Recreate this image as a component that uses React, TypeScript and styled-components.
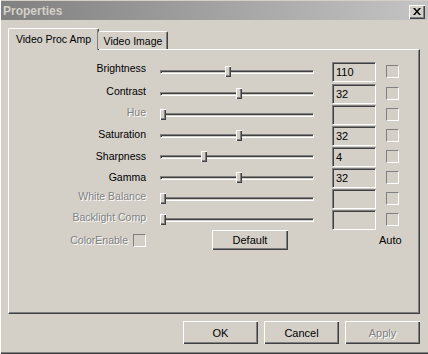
import React from 'react';
import styled, { createGlobalStyle, css } from 'styled-components';

const FACE = '#d4d0c8';
const SHADOW = '#808080';
const DARK = '#404040';
const HILITE = '#ffffff';
const FONT = '"Liberation Sans", Arial, sans-serif';

const Global = createGlobalStyle`
  html, body { margin: 0; padding: 0; background: ${FACE}; }
  body { font-family: ${FONT}; font-size: 10.5px; color: #000; }
  * { box-sizing: border-box; }
`;

const disabledText = css`
  color: ${SHADOW};
  text-shadow: 1px 1px 0 ${HILITE};
`;

const raised = css`
  box-shadow: inset 1px 1px 0 ${HILITE}, inset -1px -1px 0 ${DARK}, inset -2px -2px 0 ${SHADOW};
`;

const Window = styled.div`
  width: 428px;
  height: 354px;
  background: ${FACE};
  display: flex;
  flex-direction: column;
  box-shadow: inset 1px 0 0 ${HILITE}, inset 0 -1px 0 ${DARK}, inset 0 -2px 0 ${SHADOW};
`;

const TitleBar = styled.div`
  height: 19px;
  margin: 1px 0 0 1px;
  padding: 0 3px 0 2px;
  display: flex;
  align-items: center;
  justify-content: space-between;
  background: linear-gradient(to right, #808080, #c4c4c4);
`;

const Title = styled.span`
  font-weight: bold;
  font-size: 12px;
  color: ${FACE};
  margin-top: 1px;
`;

const CloseButton = styled.div`
  width: 16px;
  height: 14px;
  margin-top: 3px;
  background: ${FACE};
  ${raised};
  display: flex;
  align-items: center;
  justify-content: center;
  padding-bottom: 1px;
  padding-right: 1px;
`;

const Body = styled.div`
  flex: 1;
  padding: 8px 8px 0 8px;
  display: flex;
  flex-direction: column;
`;

const TabStrip = styled.div`
  display: flex;
  align-items: flex-end;
  height: 22px;
  margin-bottom: -1px;
  position: relative;
  z-index: 1;
`;

const Tab = styled.div<{ $active?: boolean }>`
  background: ${FACE};
  border-top: 1px solid ${HILITE};
  border-left: 1px solid ${HILITE};
  border-right: 1px solid ${DARK};
  border-top-left-radius: 2px;
  border-top-right-radius: 2px;
  box-shadow: inset -1px 0 0 ${SHADOW};
  display: flex;
  justify-content: center;
  ${(p) =>
    p.$active
      ? css`
          width: 91px;
          height: 22px;
          padding-top: 4px;
        `
      : css`
          width: 70px;
          height: 18px;
          margin-bottom: 1px;
          margin-left: -1px;
          border-left-color: transparent;
          padding-top: 3px;
        `}
`;

const Panel = styled.div`
  width: 412px;
  height: 265px;
  border-top: 1px solid ${HILITE};
  border-left: 1px solid ${HILITE};
  border-right: 1px solid ${DARK};
  border-bottom: 1px solid ${DARK};
  box-shadow: inset -1px -1px 0 ${SHADOW};
  padding-top: 12px;
  display: flex;
  flex-direction: column;
`;

const Row = styled.div`
  height: 21px;
  display: flex;
  align-items: flex-start;
  flex-shrink: 0;
  &:first-child {
    height: 22px;
  }
`;

const Label = styled.div<{ $disabled?: boolean; $dy: number }>`
  width: 137px;
  text-align: right;
  line-height: 13px;
  margin-top: ${(p) => p.$dy}px;
  white-space: nowrap;
  ${(p) => p.$disabled && disabledText};
`;

const SliderBox = styled.div`
  margin-left: 14px;
  width: 154px;
  height: 20px;
  padding-top: 8px;
  position: relative;
`;

const Track = styled.div`
  height: 4px;
  border-top: 1px solid ${SHADOW};
  border-left: 1px solid ${SHADOW};
  border-bottom: 1px solid ${HILITE};
  border-right: 1px solid ${HILITE};
  box-shadow: inset 1px 1px 0 ${DARK};
`;

const Thumb = styled.div`
  position: absolute;
  top: 4px;
  width: 6px;
  height: 11px;
  background: ${FACE};
  ${raised};
`;

const EditBox = styled.div`
  margin-left: 18px;
  width: 44px;
  height: 20px;
  background: ${FACE};
  border-top: 1px solid ${SHADOW};
  border-left: 1px solid ${SHADOW};
  border-bottom: 1px solid ${HILITE};
  border-right: 1px solid ${HILITE};
  box-shadow: inset 1px 1px 0 ${DARK};
  padding: 3px 0 0 3px;
  line-height: 13px;
  font-size: 11px;
`;

const CheckBox = styled.div<{ $ml?: number }>`
  margin-left: ${(p) => p.$ml ?? 10}px;
  margin-top: 3px;
  width: 13px;
  height: 13px;
  flex-shrink: 0;
  background: ${FACE};
  border-top: 1px solid ${SHADOW};
  border-left: 1px solid ${SHADOW};
  border-bottom: 1px solid ${HILITE};
  border-right: 1px solid ${HILITE};
`;

const EnableCell = styled.div`
  width: 137px;
  display: flex;
  justify-content: flex-end;
  align-items: flex-start;
`;

const EnableLabel = styled.span`
  line-height: 13px;
  margin-top: 3px;
  ${disabledText};
`;

const ButtonCell = styled.div`
  margin-left: 14px;
  width: 154px;
  padding-left: 52px;
  margin-top: -1px;
`;

const PushButton = styled.div<{ $w: number; $h: number; $disabled?: boolean }>`
  width: ${(p) => p.$w}px;
  height: ${(p) => p.$h}px;
  background: ${FACE};
  ${raised};
  display: flex;
  align-items: center;
  justify-content: center;
  font-size: 11px;
  ${(p) => p.$disabled && disabledText};
`;

const AutoText = styled.div`
  margin-left: 65px;
  margin-top: 3px;
  line-height: 13px;
  font-size: 11px;
`;

const ButtonRow = styled.div`
  margin-top: 7px;
  display: flex;
  justify-content: flex-end;
  gap: 6px;
`;

type Ctrl = { name: string; value: string; pos: number; dy: number; disabled?: boolean };

const controls: Ctrl[] = [
  { name: 'Brightness', value: '110', pos: 0.44, dy: 0 },
  { name: 'Contrast', value: '32', pos: 0.514, dy: 1 },
  { name: 'Hue', value: '', pos: 0, dy: 1, disabled: true },
  { name: 'Saturation', value: '32', pos: 0.514, dy: 2 },
  { name: 'Sharpness', value: '4', pos: 0.277, dy: 3 },
  { name: 'Gamma', value: '32', pos: 0.514, dy: 3 },
  { name: 'White Balance', value: '', pos: 0, dy: 1, disabled: true },
  { name: 'Backlight Comp', value: '', pos: 0, dy: 1, disabled: true },
];

const CloseIcon = () => (
  <svg width="8" height="7" viewBox="0 0 8 7">
    <path d="M0 0h2l2 2.5L6 0h2L5 3.5 8 7H6L4 4.5 2 7H0l3-3.5z" fill="#000" />
  </svg>
);

export default function App() {
  return (
    <>
      <Global />
      <Window>
        <TitleBar>
          <Title>Properties</Title>
          <CloseButton>
            <CloseIcon />
          </CloseButton>
        </TitleBar>
        <Body>
          <TabStrip>
            <Tab $active>Video Proc Amp</Tab>
            <Tab>Video Image</Tab>
          </TabStrip>
          <Panel>
            {controls.map((c) => (
              <Row key={c.name}>
                <Label $disabled={c.disabled} $dy={c.dy}>{c.name}</Label>
                <SliderBox>
                  <Track />
                  <Thumb style={{ left: `${c.pos * 148}px` }} />
                </SliderBox>
                <EditBox>{c.value}</EditBox>
                <CheckBox />
              </Row>
            ))}
            <Row>
              <EnableCell>
                <EnableLabel>ColorEnable</EnableLabel>
                <CheckBox $ml={5} />
              </EnableCell>
              <ButtonCell>
                <PushButton $w={76} $h={20}>Default</PushButton>
              </ButtonCell>
              <AutoText>Auto</AutoText>
            </Row>
          </Panel>
          <ButtonRow>
            <PushButton $w={75} $h={23}>OK</PushButton>
            <PushButton $w={75} $h={23}>Cancel</PushButton>
            <PushButton $w={75} $h={23} $disabled>Apply</PushButton>
          </ButtonRow>
        </Body>
      </Window>
    </>
  );
}
